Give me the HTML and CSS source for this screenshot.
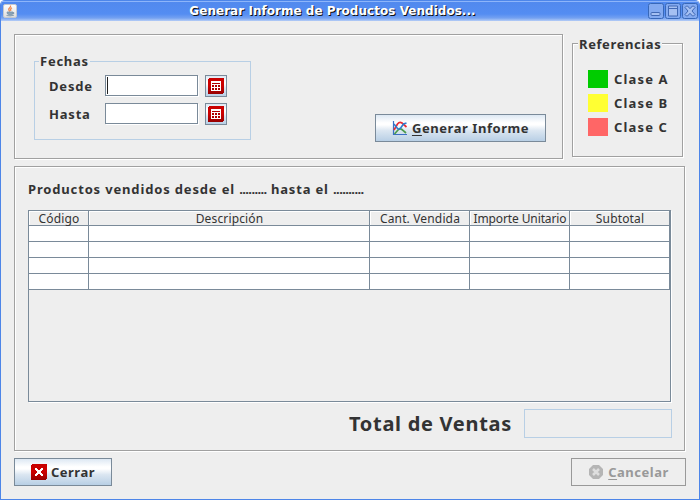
FILE: index.html
```html
<!DOCTYPE html>
<html lang="es">
<head>
<meta charset="utf-8">
<title>Generar Informe de Productos Vendidos...</title>
<link rel="stylesheet" href="styles.css">
</head>
<body>
<div class="window">
  <header class="titlebar">
    <svg class="java" width="14" height="14" viewBox="0 0 14 14"><defs><linearGradient id="jb" x2="0" y2="1"><stop stop-color="#fff"/><stop offset="1" stop-color="#ddd"/></linearGradient></defs><rect x=".5" y=".5" width="13" height="13" rx="1.5" fill="url(#jb)" stroke="#c4c8ce"/><path d="M7.5 1.5Q8 3 6.300 4.300Q5 5.500 6.800 7.500M9 3.800Q6.800 5 8 6.800" fill="none" stroke="#ee8a50" stroke-width="1.300"/><path d="M4 8h6v2q-3 1.500-5.500 0zM3.500 11.500q3.500 1 7.500-.3M10 8.500q2 0 .3 1.500" fill="#8aa5b8" stroke="#7893a8" stroke-width=".8"/></svg>
    <h1 class="title">Generar Informe de Productos Vendidos...</h1>
    <div class="controls">
      <svg width="16" height="16" viewBox="0 0 16 16"><rect x=".5" y=".5" width="15" height="15" rx="2" class="ctl"/><rect x="3" y="9.500" width="9" height="3" rx="1" class="glyph"/></svg>
      <svg width="16" height="16" viewBox="0 0 16 16"><rect x=".5" y=".5" width="15" height="15" rx="2" class="ctl"/><path d="M3.500 3h9v10h-9zM3.500 5.500h9" class="glyph"/></svg>
      <svg width="16" height="16" viewBox="0 0 16 16"><rect x=".5" y=".5" width="15" height="15" rx="2" class="ctl"/><path d="M3 4.500L4.500 3h1L8 5.700 10.500 3h1L13 4.500 10 8l3 3.500L11.500 13h-1L8 10.300 5.500 13h-1L3 11.500 6 8z" class="glyph"/></svg>
    </div>
  </header>
  <main class="content">
    <div class="top">
      <section class="panel filters">
        <fieldset class="dates">
          <legend>Fechas</legend>
          <label class="lab">Desde</label><div class="input"><i class="caret"></i></div>
          <button class="btn cal"><svg width="16" height="16" viewBox="0 0 16 16" shape-rendering="crispEdges"><use href="#calendar"/></svg></button>
          <label class="lab">Hasta</label><div class="input"></div>
          <button class="btn cal"><svg width="16" height="16" viewBox="0 0 16 16" shape-rendering="crispEdges"><defs><linearGradient id="red" x2="0" y2="1"><stop stop-color="#c90000"/><stop offset=".5" stop-color="#c00"/><stop offset="1" stop-color="#960000"/></linearGradient><g id="calendar"><path d="M1 0H16V15H15V16H0V1H1z" fill="url(#red)"/><path d="M3 3h10v10H3z" fill="#fff"/><path d="M4 5h8v1H4zM4 7h2v2H4zM7 7h2v2H7zM10 7h2v2h-2zM4 10h2v2H4zM7 10h2v2H7zM10 10h2v2h-2z" fill="#b00000"/></g></defs><use href="#calendar"/></svg></button>
        </fieldset>
        <button class="btn report"><svg width="16" height="16" viewBox="0 0 16 16"><path d="M1.500 1v13.500H15" fill="none" stroke="#3b6fc4" stroke-width="1.200"/><path d="M2.500 14L6 10Q8.500 7.500 11 10.500L14 13" fill="none" stroke="#4c9b4c" stroke-width="1.700"/><path d="M2 10L5.500 4Q7.500 1.500 10 3L14.500 7" fill="none" stroke="#e82c35" stroke-width="1.700"/><path d="M2 4L5.500 8.500Q7 10 9 7.500L11.500 4L14.500 3" fill="none" stroke="#2c7bd0" stroke-width="1.500"/></svg><span><u>G</u>enerar Informe</span></button>
      </section>
      <section class="panel refs">
        <h2 class="refs-title">Referencias</h2>
        <ul class="classes">
          <li><i class="swatch green"></i>Clase A</li>
          <li><i class="swatch yellow"></i>Clase B</li>
          <li><i class="swatch red"></i>Clase C</li>
        </ul>
      </section>
    </div>
    <section class="panel results">
      <h2 class="heading">Productos vendidos desde el <span class="dots">.........</span> hasta el <span class="dots">..........</span></h2>
      <div class="scroll">
        <table class="grid">
          <colgroup><col class="c1"><col class="c2"><col class="c3"><col class="c3"><col class="c3"></colgroup>
          <thead><tr><th>Código</th><th>Descripción</th><th>Cant. Vendida</th><th class="tight">Importe Unitario</th><th>Subtotal</th></tr></thead>
          <tbody>
            <tr><td></td><td></td><td></td><td></td><td></td></tr>
            <tr><td></td><td></td><td></td><td></td><td></td></tr>
            <tr><td></td><td></td><td></td><td></td><td></td></tr>
            <tr><td></td><td></td><td></td><td></td><td></td></tr>
          </tbody>
        </table>
      </div>
      <div class="total"><span class="total-label">Total de Ventas</span><div class="total-field"></div></div>
    </section>
    <footer class="actions">
      <button class="btn close"><svg width="16" height="16" viewBox="0 0 16 16" shape-rendering="crispEdges"><path d="M1 0H16V15H15V16H0V1H1z" fill="url(#red)"/><path d="M4 4h2v1h1v1h2V5h1V4h2v2h-1v1h-1v2h1v1h1v2h-2v-1H9v-1H7v1H6v1H4v-2h1V9h1V7H5V6H4z" fill="#fff"/></svg><span>Cerrar</span></button>
      <button class="btn cancel" disabled><svg width="16" height="16" viewBox="0 0 16 16"><path d="M5 1h6l4 4v6l-4 4H5l-4-4V5z" fill="#b5b5b5"/><path d="M5 5l6 6M11 5l-6 6" stroke="#dedede" stroke-width="2.500"/></svg><span><u>C</u>ancelar</span></button>
    </footer>
  </main>
</div>
</body>
</html>
```
FILE: styles.css
```css
* { box-sizing: border-box; }
body { margin: 0; background: #fff; }
.window {
  width: 700px; height: 500px; overflow: hidden;
  display: flex; flex-direction: column;
  border: solid #4d85e8; border-width: 0 1px 1px;
  border-radius: 5px 5px 0 0;
  background: #eee; color: #333;
  font: bold 13px/16px "Noto Sans", sans-serif;
}
.titlebar {
  height: 21px; flex: none; display: grid; grid-template-columns: 54px 1fr 54px;
  background: linear-gradient(#4d86ea 0 1px, #8db5fa 1px 2px, #5189ee 2px, #548df2 14px, #74a1f1 18px, #b5cdf6 21px);
}
.java { margin: 4px 0 0 2px; }
.title { margin: 3px 0 0 -35px; font: bold 12px/16px "DejaVu Sans", sans-serif; letter-spacing: .03px; color: #fff; text-align: center; text-shadow: 1px 1px 0 #111; white-space: nowrap; }
.controls { display: flex; gap: 1px; padding: 3px 0 0 3px; }
.controls svg { flex: none; }
.ctl { fill: #83aaf0; stroke: #3868b8; }
.glyph { fill: #a5c0f2; stroke: #4169b4; }
.content { flex: 1; padding: 13px 0 0 13px; }
.panel { border: 1px solid #a0a0a0; box-shadow: 1px 1px 0 #fff, inset 1px 1px 0 #fff; }
.top { display: flex; gap: 9px; }
.filters { width: 549px; height: 125px; display: flex; justify-content: space-between; padding: 19px 16px 0 19px; }
.dates {
  width: 217px; height: 86px; margin: 0; padding: 6px 0 0 14px; border: 1px solid #b8cfe5;
  display: grid; grid-template-columns: 56px 94px 22px; grid-template-rows: 22px 22px; row-gap: 6px;
}
.dates .cal { margin-left: 6px; }
.dates legend { padding: 0 1px; margin-left: -10px; line-height: 15px; letter-spacing: .75px; }
.lab { line-height: 22px; letter-spacing: .8px; }
.input { width: 93px; height: 21px; background: #fff; border: 1px solid #7a8a99; box-shadow: 1px 1px 0 #fff; padding: 1px; }
.caret { display: block; width: 1px; height: 17px; background: #222; }
.btn {
  display: flex; align-items: center; justify-content: center; gap: 4px; padding: 0;
  border: 1px solid #7a8a99; color: #333; font: inherit; white-space: nowrap;
  background: linear-gradient(#dde8f3 0, #fff 30%, #fff 38%, #dbe6f1 60%, #b8cfe5 100%);
}
.btn u { text-underline-offset: 2px; text-decoration-thickness: 1px; }
.cal { width: 22px; height: 22px; }
.report { width: 171px; height: 28px; margin-top: 60px; letter-spacing: .55px; }
.refs { width: 111px; height: 114px; margin-top: 9px; padding-left: 6px; }
.refs-title { width: 84px; margin: -9px 0 0 -1px; padding-left: 1px; background: #eee; font-size: 13px; line-height: 18px; letter-spacing: .6px; }
.classes { list-style: none; margin: 14px 0 0 9px; padding: 0; letter-spacing: 1.15px; white-space: nowrap; }
.classes li { height: 24px; display: flex; gap: 6px; line-height: 24px; align-items: center; }
.swatch { width: 20px; height: 18px; }
.green { background: #0c0; }
.yellow { background: #ff3; }
.red { background: #f66; }
.results { width: 671px; height: 285px; margin-top: 7px; padding: 12px 12px 0 13px; }
.heading { margin: 0; font-size: 13px; line-height: 20px; letter-spacing: .84px; white-space: nowrap; }
.dots { letter-spacing: -.6px; }
.scroll { width: 643px; height: 192px; margin-top: 11px; border: 1px solid #7a8a99; box-shadow: 1px 1px 0 #fff; }
.grid { width: 641px; table-layout: fixed; border-collapse: separate; border-spacing: 0; }
.c1 { width: 60px; }
.c2 { width: 281px; }
.c3 { width: 100px; }
.grid th { height: 15px; padding: 1px 0 0 1px; border: solid #7a8a99; border-width: 0 1px 1px 0; box-shadow: inset 1px 1px 0 #fff; font-size: 12px; line-height: 13px; font-weight: normal; letter-spacing: .15px; white-space: nowrap; }
.grid .tight { letter-spacing: -.12px; }
.grid td { height: 16px; padding: 0; background: #fff; border: solid #7a8a99; border-width: 0 1px 1px 0; }
.total { display: flex; justify-content: flex-end; gap: 12px; margin-top: 7px; }
.total-label { font-size: 20px; line-height: 29px; letter-spacing: .7px; }
.total-field { width: 148px; height: 29px; border: 1px solid #b8cfe5; }
.actions { width: 672px; display: flex; justify-content: space-between; margin-top: 7px; }
.actions .btn { height: 28px; letter-spacing: .5px; }
.close { width: 98px; }
.cancel { width: 115px; }
.btn.cancel { background: #eee; border-color: #999; color: #999; }
```
